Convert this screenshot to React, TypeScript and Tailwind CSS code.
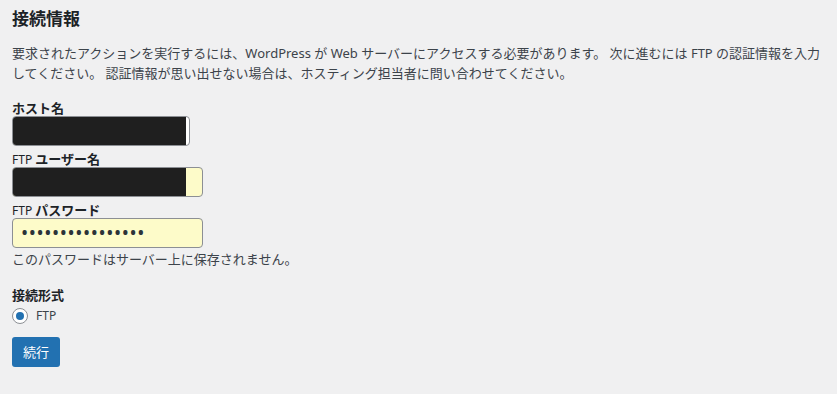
import React from 'react';

const font = "font-['Segoe_UI','Noto_Sans','Noto_Sans_CJK_JP',sans-serif]";

const Field: React.FC<{ width: string; fill: string; redactTo?: number; children?: React.ReactNode }> = ({
  width,
  fill,
  redactTo,
  children
}) => (
  <div className={`relative mt-px h-[30px] ${width} ${fill} rounded-[4px] border border-[#8c8f94] overflow-hidden`}>
    {children}
    {redactTo !== undefined && (
      <div className="absolute left-[-1px] top-[-1px] bottom-[-1px] bg-[#1f1f1f] rounded-l-[4px]" style={{ width: redactTo }} />
    )}
  </div>
);

export default function App() {
  return (
    <div className={`min-h-[394px] w-full bg-[#f0f0f1] pl-[12px] pt-[7px] text-[#3c434a] ${font}`}>
      {/* Heading */}
      <h2 className="text-[17px] leading-[24px] font-bold text-[#1d2327]">接続情報</h2>

      {/* Intro text */}
      <p className="mt-[12px] text-[13px] leading-[20px] whitespace-nowrap">
        要求されたアクションを実行するには、WordPress が Web サーバーにアクセスする必要があります。 次に進むには FTP の認証情報を入力
        <br />
        してください。 認証情報が思い出せない場合は、ホスティング担当者に問い合わせてください。
      </p>

      {/* Host */}
      <div className="mt-[18px] h-[14px] text-[13px] leading-[14px] font-bold text-[#1d2327]">ホスト名</div>
      <Field width="w-[178px]" fill="bg-white" redactTo={174} />

      {/* Username */}
      <div className="mt-[6px] h-[14px] text-[13px] leading-[14px] text-[#1d2327]">
        <span className="text-[12px]">FTP </span>
        <span className="font-bold">ユーザー名</span>
      </div>
      <Field width="w-[191px]" fill="bg-[#fdfbc9]" redactTo={174} />

      {/* Password */}
      <div className="mt-[6px] h-[14px] text-[13px] leading-[14px] text-[#1d2327]">
        <span className="text-[12px]">FTP </span>
        <span className="font-bold">パスワード</span>
      </div>
      <Field width="w-[191px]" fill="bg-[#fdfbc9]">
        <div className="flex h-full items-center pl-[8px] text-[19px] leading-none tracking-[0.6px] text-[#2c3338]">
          ••••••••••••••••
        </div>
      </Field>

      <p className="mt-px text-[13px] leading-[20px]">このパスワードはサーバー上に保存されません。</p>

      {/* Connection type */}
      <div className="mt-[16px] text-[13px] leading-[20px] font-bold text-[#1d2327]">接続形式</div>
      <label className="mt-[3px] flex items-center gap-[8px] h-[16px]">
        <span className="flex h-[16px] w-[16px] items-center justify-center rounded-full border border-[#8c8f94] bg-white">
          <span className="h-[8px] w-[8px] rounded-full bg-[#2271b1]" />
        </span>
        <span className="text-[12px] leading-[16px] text-[#3c434a]">FTP</span>
      </label>

      <button className="mt-[13px] h-[30px] w-[48px] rounded-[3px] bg-[#2271b1] text-[13px] leading-[30px] text-white">
        続行
      </button>
    </div>
  );
}
